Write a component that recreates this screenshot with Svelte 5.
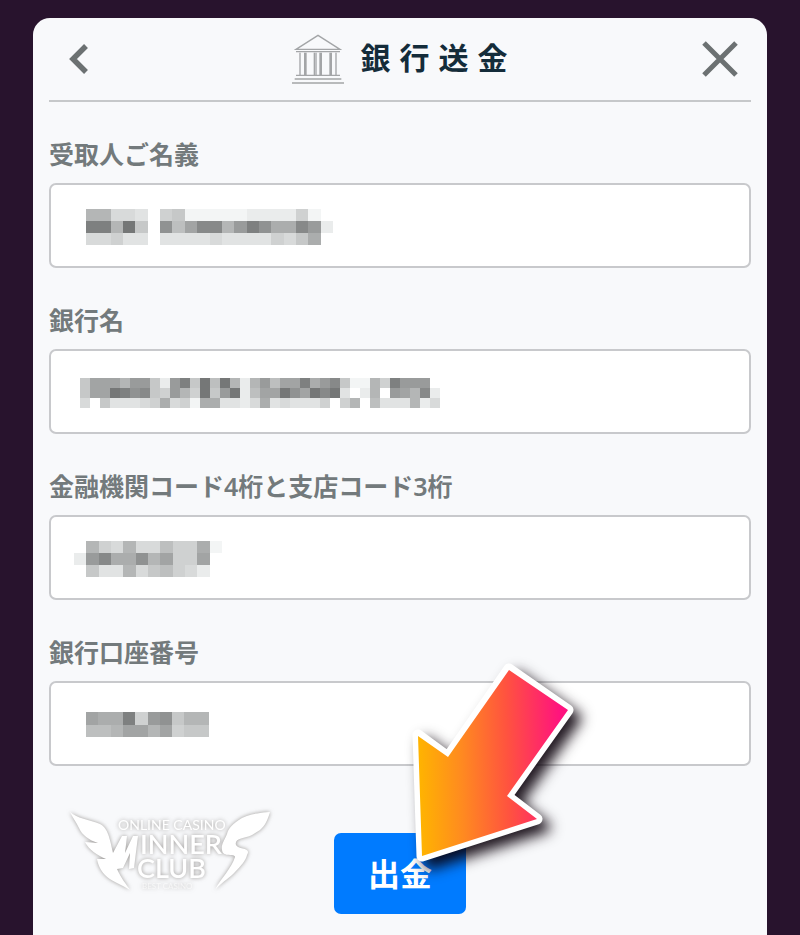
<script>
  // Each digit is one tile of the mosaic: 0 is white, f is the darkest grey.
  const fields = [
    {
      id: 'holder', label: '受取人ご名義', start: 37, w: 37, h: 36,
      rows: ['88443056111112222510', 'ee8f60c7add8bec99db2', '44533033334333354690']
    },
    {
      id: 'bank', label: '銀行名', start: 31, w: 30, h: 30,
      rows: [
        '6aaa8bb62be6f7f828b7aae9bd61185ebbb0',
        '6aafecd65b85f6bf27aafcafdf30280ba8d2',
        '406333459451993324934333505807333824'
      ]
    },
    {
      id: 'code', label: '金融機関コード4桁と支店コード3桁', start: 25, w: 37, h: 36,
      rows: ['085484475591', '2bd99c8a55a0', '063384675420']
    },
    {
      id: 'account', label: '銀行口座番号', start: 37, w: 37, h: 37,
      rows: ['a99e5bc688', '778aa8a566']
    }
  ];

  const shade = (digit) => {
    const v = 252 - parseInt(digit, 16) * 9;
    return `rgb(${v},${v + 2},${v + 2})`;
  };
</script>

<main class="card">
  <header>
    <button type="button" class="icon-button" aria-label="戻る">
      <svg width="20" height="30" viewBox="0 0 20 30"><path d="M17 2 4 15 17 28" fill="none" stroke="#6c7172" stroke-width="5.500" /></svg>
    </button>
    <div class="title">
      <svg width="52" height="50" viewBox="0 0 156 150" fill="none" stroke="#a3a5a7" stroke-width="4" aria-hidden="true">
        <path d="M12 46 78 4 144 46ZM12 53H144M24 56V122M38 56V122M42 56V122M67 56V122M72 56V122M84 56V122M88 56V122M114 56V122M118 56V122M132 56V122M12 124H144M8 135H148M0 147H156" />
      </svg>
      <h1>銀行送金</h1>
    </div>
    <button type="button" class="icon-button close" aria-label="閉じる">
      <svg width="38" height="38" viewBox="0 0 38 38"><path d="M3 3 35 35M35 3 3 35" fill="none" stroke="#6c7172" stroke-width="5" /></svg>
    </button>
  </header>

  <form onsubmit={(e) => e.preventDefault()}>
    {#each fields as field}
      <div class="field">
        <label for={field.id}>{field.label}</label>
        <div class="box">
          <input id={field.id} type="text" autocomplete="off" />
          <div class="mosaic" style="padding-left: {field.start}px">
            <svg
              width={Math.round((field.rows[0].length * field.w) / 3)}
              height={Math.round((field.rows.length * field.h) / 3)}
              viewBox="0 0 {field.rows[0].length * field.w} {field.rows.length * field.h}"
              preserveAspectRatio="none"
              shape-rendering="crispEdges"
              aria-hidden="true"
            >
              {#each field.rows as row, y}
                {#each row.split('') as digit, x}
                  {#if digit !== '0'}
                    <rect x={x * field.w} y={y * field.h} width={field.w} height={field.h} fill={shade(digit)} />
                  {/if}
                {/each}
              {/each}
            </svg>
          </div>
        </div>
      </div>
    {/each}

    <div class="actions">
      <svg class="logo" width="210" height="92" viewBox="66 804 210 92" role="img" aria-label="Online Casino Winners Club">
        <g fill="#fff">
          <path d="M70 812 C76 818 90 820 100 824 C107 828 109 834 113 853 L122 836 L127 836 L125 853 L133 836 L138 836 L134 868 L129 869 L130 853 L123 868 L117 869 C121 878 126 884 130 890 C121 884 110 881 105 875 C100 870 98 864 97 859 L106 859 C97 855 89 850 85 842 L98 843 C89 840 82 835 79 828 C76 822 73 818 70 812Z" />
          <path d="M270 812 C258 813 250 814 242 818 C233 823 228 829 227 834 C224 841 221 845 222 850 C223 858 235 853 235 857 C232 868 221 878 215 890 C224 880 231 877 235 872 C241 866 246 860 247 855 C252 847 238 850 236 845 C234 838 244 839 252 835 L260 830 C265 826 268 819 270 812Z" />
          <text x="118" y="830" class="small">ONLINE CASINO</text>
          <text x="140" y="854" class="big">INNER</text>
          <text x="137" y="878" class="big">CLUB</text>
          <text x="142" y="889" class="tiny">BEST CASINO</text>
        </g>
      </svg>
      <div class="submit-wrap">
        <button type="submit" class="submit">出金</button>
        <svg class="arrow" width="200" height="220" viewBox="400 650 200 220" aria-hidden="true">
          <defs>
            <linearGradient id="heat" gradientUnits="userSpaceOnUse" x1="418" y1="760" x2="562" y2="756">
              <stop offset="0" stop-color="#ffb400" />
              <stop offset="0.300" stop-color="#ff8a20" />
              <stop offset="0.620" stop-color="#ff533f" />
              <stop offset="1" stop-color="#ff127f" />
            </linearGradient>
          </defs>
          <path class="rim" d="M509 669 568 710 507 796 537 819 422 856 418 735 448 757Z" />
          <path d="M509 670 568 710 507 796 537 819 422 856 418 736 448 757Z" fill="url(#heat)" />
        </svg>
      </div>
    </div>
  </form>
</main>

<style>
  :global(body) {
    margin: 0;
    background: #28132d;
  }
  .card, .card * {
    box-sizing: border-box;
  }
  .card {
    margin: 18px 33px 0;
    min-height: calc(100vh - 18px);
    padding: 0 16px 21px;
    border-radius: 17px 17px 0 0;
    background: #f8f9fb;
    font-family: "Noto Sans", "Noto Sans CJK JP", sans-serif;
  }
  header {
    display: flex;
    align-items: center;
    justify-content: space-between;
    height: 84px;
    border-bottom: 2px solid #c6c8ca;
  }
  .icon-button {
    display: flex;
    width: 58px;
    padding: 0 0 0 20px;
    border: 0;
    background: none;
    cursor: pointer;
  }
  .icon-button.close {
    justify-content: flex-end;
    padding: 0 12px 0 0;
  }
  .title {
    display: flex;
    align-items: center;
    gap: 17px;
    padding-left: 8px;
  }
  h1 {
    margin: 0;
    padding-bottom: 7px;
    color: #142c3a;
    font-family: "Noto Sans CJK JP", sans-serif;
    font-size: 30px;
    font-weight: 700;
    line-height: 40px;
    letter-spacing: 9px;
  }
  .field {
    padding-top: 37px;
  }
  label {
    display: block;
    margin-bottom: 14px;
    color: #737a7c;
    font-size: 25px;
    font-weight: 600;
    line-height: 30px;
  }
  .box {
    position: relative;
  }
  input {
    display: block;
    width: 100%;
    height: 85px;
    padding: 0 36px;
    border: 2px solid #c8c9cc;
    border-radius: 7px;
    background: #fff;
    color: #495057;
    font: inherit;
    font-size: 28px;
  }
  .mosaic {
    position: absolute;
    inset: 2px 0 0;
    display: flex;
    align-items: center;
    pointer-events: none;
  }
  .actions {
    display: grid;
    grid-template-columns: 1fr auto 1fr;
    align-items: start;
    padding-top: 38px;
  }
  .logo {
    margin-left: 17px;
    filter: drop-shadow(0 0 2px rgba(90, 85, 80, 0.6));
  }
  .logo text {
    font-family: Lato, sans-serif;
  }
  .small {
    font-size: 14px;
  }
  .big {
    font-size: 27px;
    font-weight: 600;
  }
  .tiny {
    font-size: 8px;
    opacity: 0.6;
  }
  .submit-wrap {
    position: relative;
    margin-top: 29px;
  }
  .submit {
    display: block;
    width: 132px;
    height: 81px;
    padding: 0 0 4px;
    border: 0;
    border-radius: 7px;
    background: #007bff;
    color: #fff;
    font-family: "Noto Sans CJK JP", sans-serif;
    font-size: 32px;
    font-weight: 600;
    cursor: pointer;
  }
  .arrow {
    position: absolute;
    left: 66px;
    bottom: 44px;
    overflow: visible;
    pointer-events: none;
    filter: drop-shadow(8px 8px 7px rgba(10, 0, 10, 0.9));
  }
  .rim {
    fill: #fff;
    stroke: #fff;
    stroke-width: 11px;
    stroke-linejoin: round;
  }
</style>
